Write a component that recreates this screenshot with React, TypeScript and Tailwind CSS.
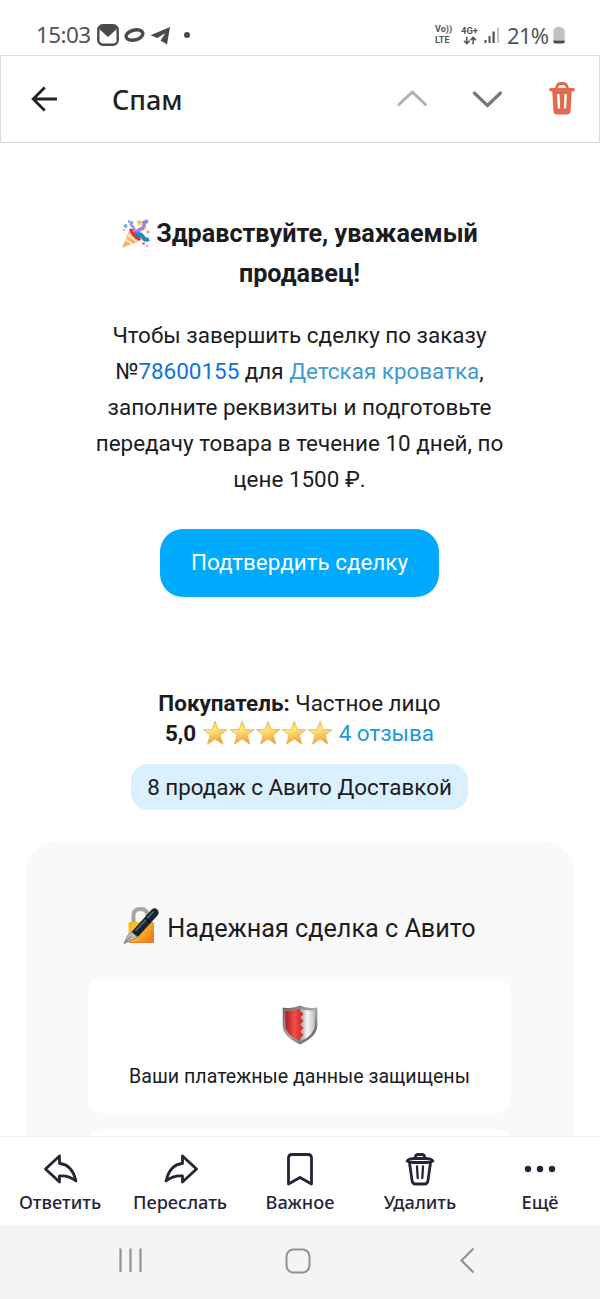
import type { ReactNode } from "react";

const ink = "#25243a";

function StatusBar() {
  return (
    <div className="flex h-[55px] items-end justify-between pr-[35px] pb-2 pl-[36px] font-['Noto_Sans',sans-serif] text-[#555]">
      <div className="flex h-6 items-center">
        <span className="w-[61px] text-[22.5px] leading-6 tracking-[-0.6px]">15:03</span>
        <svg width="22" height="22" viewBox="0 0 22 22" className="text-[#4a4a4a]">
          <rect x="1.3" y="1.3" width="19.4" height="19.4" rx="4.5" fill="none" stroke="currentColor" strokeWidth="2.4" />
          <path d="M2.5 1.5h17v3.8L11 13 2.5 5.3z" fill="currentColor" />
        </svg>
        <svg width="22" height="22" viewBox="0 0 22 22" className="ml-[5px]">
          <ellipse cx="10.5" cy="11" rx="8.5" ry="4.9" fill="none" stroke="#4a4a4a" strokeWidth="3.4" transform="rotate(-14 10.5 11)" />
        </svg>
        <svg width="21" height="20" viewBox="0 0 21 20" className="ml-1 mt-px">
          <path d="M20 1 17 18.500 10.500 14.500 15.500 7 7.500 12 0.500 9.200Z" fill="#4a4a4a" />
        </svg>
        <span className="ml-[13px] h-[6px] w-[6px] rounded-full bg-[#4a4a4a]" />
      </div>
      <div className="flex h-6 items-center">
        <div className="w-[25px] font-['Roboto',sans-serif] text-[9px] leading-[11px] font-bold">
          <div>Vo))</div>
          <div>LTE</div>
        </div>
        <div className="flex w-[19px] flex-col items-center font-['Roboto',sans-serif] text-[9.5px] leading-[11px] font-bold">
          <div>4G+</div>
          <svg width="14" height="9" viewBox="0 0 14 9" fill="none" stroke="currentColor" strokeWidth="1.6">
            <path d="M3.8.8v6.4M1 4.7l2.8 2.8 2.8-2.8M10.2 8.2V1.8M7.4 4.3l2.8-2.8L13 4.3" />
          </svg>
        </div>
        <svg width="17" height="18" viewBox="0 0 17 18" className="ml-[5px]">
          <rect x="0.5" y="14" width="2" height="3" fill="#555" />
          <rect x="4.5" y="10" width="2" height="7" fill="#555" />
          <rect x="8.5" y="5.5" width="2.2" height="11.5" fill="#555" />
          <rect x="13" y="1.5" width="2" height="15.5" fill="#c6c6c6" />
        </svg>
        <span className="ml-[6px] w-[43px] text-[22px] leading-6 tracking-[-0.7px]">21%</span>
        <svg width="12" height="18" viewBox="0 0 12 18" className="ml-[3px]">
          <path d="M3.5 1.8V.8h5v1q3.2.3 3.2 3.2v9.5H.3V5q0-2.9 3.2-3.2z" fill="#c2c2c2" />
          <path d="M.3 14.400h11.400v1.200q0 1.900-2 1.900H2.300q-2 0-2-1.900z" fill="#4a4a4a" />
        </svg>
      </div>
    </div>
  );
}

function Header() {
  return (
    <header className="flex h-[88px] items-center border border-[#dcdcdc] pr-[24px] pl-[29px]">
      <svg width="28" height="28" viewBox="0 0 28 28" fill="none" stroke="#222" strokeWidth="2.8">
        <path d="M27 14H3M14.700 2.500 3.200 14l11.500 11.500" />
      </svg>
      <h1 className="ml-[54px] font-['Noto_Sans',sans-serif] text-[27px] leading-none font-medium text-[#222]">Спам</h1>
      <div className="ml-auto flex items-center">
        <svg width="32" height="20" viewBox="0 0 32 20" fill="none" stroke="#b1b1b1" strokeWidth="3" strokeLinecap="round">
          <path d="M3 15.500 16.300 3 29.500 15.500" />
        </svg>
        <svg width="32" height="20" viewBox="0 0 32 20" fill="none" stroke="#777" strokeWidth="3.200" strokeLinecap="round" className="ml-[43px]">
          <path d="M3.300 4 16.500 16.500 29.500 4" />
        </svg>
        <svg width="26" height="34" viewBox="0 0 26 34" className="-mt-[2px] ml-[46px]">
          <path d="M7 8.500 8.200 5Q9.200 2.500 11.500 2.500H14.500Q16.800 2.500 17.800 5L19 8.500" fill="none" stroke="#e26a50" strokeWidth="2.800" />
          <path d="M1.800 8.700H24.200" stroke="#e26a50" strokeWidth="3.200" strokeLinecap="round" />
          <path d="M3.200 9H22.800L21.600 30Q21.400 33.500 18 33.500H8Q4.600 33.500 4.400 30Z" fill="#e26a50" />
          <path d="M9.300 13 10 27.500M16.700 13 16 27.500" stroke="#fff" strokeWidth="2.400" />
        </svg>
      </div>
    </header>
  );
}

function PartyPopper() {
  return (
    <svg width="29" height="30" viewBox="0 0 29 30" className="mr-[6px]">
      <defs>
        <linearGradient id="cone" x1="0" y1="0" x2="1" y2="1">
          <stop offset="0" stopColor="#fbdc9e" />
          <stop offset="1" stopColor="#e58f45" />
        </linearGradient>
      </defs>
      <path d="M1 29 8.500 10Q15 14 19.500 21.500Z" fill="url(#cone)" />
      <path d="M4.500 20.500 11.500 25M6.500 15.500 16 23" stroke="#fff0cf" strokeWidth="1.500" />
      <path d="M8.500 10Q13 9 17 14.500T19.500 21.500Q15 21 11.500 16.500T8.500 10Z" fill="#c33547" />
      <path d="M12 13Q15 10.500 11.500 7.500T12 3" stroke="#a68be0" strokeWidth="2.600" fill="none" />
      <path d="M16 15Q16 11 20 10T23 3.500L27 2" stroke="#9b80df" strokeWidth="3.600" fill="none" />
      <path d="M15 16Q20 14 22 18T28 20" stroke="#178cba" strokeWidth="4" fill="none" />
      <path d="m18.500 0 1 2.300 2.600.2-2 1.700.6 2.500-2.200-1.300-2.300 1.300.7-2.500-2-1.700 2.600-.2z" fill="#f3c43b" />
      <circle cx="4.500" cy="7" r="2" fill="#65b8e8" />
      <circle cx="8" cy="2.500" r="1.300" fill="#55aee2" />
      <circle cx="27" cy="13" r="1.600" fill="#ee85a3" />
      <circle cx="22.500" cy="24.500" r="1.600" fill="#ed75a1" />
      <circle cx="26" cy="27" r="1.200" fill="#f3a0b6" />
      <circle cx="24" cy="9" r="1.200" fill="#f5b660" />
      <circle cx="3" cy="11" r="1" fill="#ee7fa0" />
    </svg>
  );
}

function Star() {
  return (
    <svg width="26.300" height="26" viewBox="0 0 26 26">
      <defs>
        <linearGradient id="gold" x1="0" y1="0" x2="0.3" y2="1">
          <stop offset="0" stopColor="#f4c735" />
          <stop offset="0.450" stopColor="#ffe77a" />
          <stop offset="1" stopColor="#f2a33c" />
        </linearGradient>
      </defs>
      <path
        d="m13 1 3.100 8.600h8.900l-7 5.500 2.700 9.200-7.700-5.400-7.700 5.400 2.700-9.200-7-5.500h8.900z"
        fill="url(#gold)"
        stroke="#e3ad4b"
        strokeWidth="0.700"
      />
    </svg>
  );
}

function LockWithPen() {
  return (
    <svg width="36" height="38" viewBox="0 0 36 38" className="-mt-[5px]">
      <defs>
        <linearGradient id="lock" x1="0" y1="0" x2="1" y2="0.600">
          <stop offset="0" stopColor="#f4ad20" />
          <stop offset="0.400" stopColor="#ffc928" />
          <stop offset="1" stopColor="#ef7c22" />
        </linearGradient>
      </defs>
      <path d="M10.500 18V9.500Q10.500 3 17.500 3T24.500 9.500V18" fill="none" stroke="#a6a6a6" strokeWidth="4" />
      <rect x="5.500" y="16" width="25.500" height="21" rx="1.500" fill="url(#lock)" />
      <path d="M6 36.500H30.500" stroke="#e17c21" strokeWidth="1" />
      <path d="M8.500 26 28.500 3.800Q31.500 1 34.200 3.500T34.500 9.500L14.800 31Q11 30.500 8.500 26Z" fill="#17252f" />
      <path d="M12.500 25 30.500 5.500" stroke="#557386" strokeWidth="1.300" />
      <path d="M22.500 12 27.500 17" stroke="#080e14" strokeWidth="1.500" />
      <path d="M8.500 26 14.800 31 9 34 1 37.500 4.500 29.500Z" fill="#b9bdc0" stroke="#707578" strokeWidth="0.700" />
      <path d="M1.500 37 8 30.500" stroke="#555" strokeWidth="0.900" />
    </svg>
  );
}

function Shield() {
  return (
    <svg width="36" height="40" viewBox="0 0 36 40">
      <defs>
        <linearGradient id="rim" x1="0" y1="0" x2="1" y2="1">
          <stop offset="0" stopColor="#666" />
          <stop offset="0.500" stopColor="#aaa" />
          <stop offset="1" stopColor="#555" />
        </linearGradient>
        <linearGradient id="red">
          <stop offset="0" stopColor="#b51b20" />
          <stop offset="0.500" stopColor="#f05048" />
          <stop offset="1" stopColor="#d61d20" />
        </linearGradient>
        <linearGradient id="silver">
          <stop offset="0.500" stopColor="#929292" />
          <stop offset="0.720" stopColor="#f8f8f8" />
          <stop offset="1" stopColor="#b8b8b8" />
        </linearGradient>
      </defs>
      <path d="M18 2Q12 5 2 4V21Q2.500 31 18 38Q33.500 31 34 21V4Q24 5 18 2Z" fill="url(#silver)" stroke="url(#rim)" strokeWidth="2.600" />
      <path d="M3.500 6Q12 6 18 3.500V6L21.500 9 18 12.500 21.500 16 18 19.500 21.500 23 18 26.500 21.500 30 18 33V36Q4 30 3.500 21Z" fill="url(#red)" />
    </svg>
  );
}

function Message() {
  return (
    <main className="flex h-[993px] flex-col items-center overflow-hidden pt-[71px] pr-px text-center font-['Roboto',sans-serif] text-[#1c1c1e]">
      <h2 className="text-[25.2px] leading-10 font-bold">
        <span className="flex items-center justify-center">
          <PartyPopper />
          <span className="whitespace-nowrap">Здравствуйте, уважаемый</span>
        </span>
        продавец!
      </h2>
      <p className="mt-[24px] text-[22.45px] leading-[35.9px] whitespace-nowrap">
        Чтобы завершить сделку по заказу
        <br />№<span className="text-[#0b74dc]">78600155</span> для <span className="text-[#3d9bd3]">Детская кроватка</span>,
        <br />
        заполните реквизиты и подготовьте
        <br />
        передачу товара в течение 10 дней, по
        <br />
        цене 1500 ₽.
      </p>
      <button className="mt-[31.5px] h-[68px] w-[279px] shrink-0 rounded-[23px] bg-[#00aaff] text-[22.45px] text-white">
        Подтвердить сделку
      </button>
      <div className="mt-[91px] text-[22.45px] leading-[30px] whitespace-nowrap">
        <div>
          <b>Покупатель:</b> Частное лицо
        </div>
        <div className="flex items-center justify-center">
          <b className="mr-[6px]">5,0</b>
          {[1, 2, 3, 4, 5].map((n) => (
            <Star key={n} />
          ))}
          <span className="ml-[5px] text-[#1a9ae0]">4 отзыва</span>
        </div>
      </div>
      <div className="mt-[16px] h-[46px] w-[337px] shrink-0 rounded-[17px] bg-[#daf0ff] text-[22.4px] leading-[46px] whitespace-nowrap">
        8 продаж с Авито Доставкой
      </div>
      <section className="mt-[31px] flex h-[320px] w-[548px] shrink-0 flex-col items-center rounded-t-[30px] bg-[#f9f9f9] pt-[67px]">
        <h3 className="flex h-10 items-center text-[25.2px] whitespace-nowrap">
          <LockWithPen />
          <span className="mt-0.5 ml-2">Надежная сделка с Авито</span>
        </h3>
        <div className="mt-[31px] flex h-[134px] w-[423px] shrink-0 flex-col items-center rounded-[14px] bg-white pt-[26px]">
          <Shield />
          <p className="mt-[17px] text-[19.6px] leading-[30px] whitespace-nowrap">Ваши платежные данные защищены</p>
        </div>
        <div className="mt-4 h-16 w-[423px] shrink-0 rounded-[14px] bg-white" />
      </section>
    </main>
  );
}

function Action({ label, children }: { label: string; children: ReactNode }) {
  return (
    <button className="flex w-[120px] flex-col items-center">
      <svg width="36" height="36" viewBox="0 0 36 36" fill="none" stroke={ink} strokeWidth="2.800" strokeLinejoin="round" strokeLinecap="round">
        {children}
      </svg>
      <span className="mt-[3px] leading-6">{label}</span>
    </button>
  );
}

function ActionBar() {
  return (
    <footer className="flex h-[89px] border-t border-[#f1f1f1] bg-white pt-[14px] font-['Noto_Sans',sans-serif] text-[18.2px] font-medium text-[#25243a]">
      <Action label="Ответить">
        <path d="M17.500 5 3.500 18 17.500 31V25Q26 24 34 30Q30 13.500 17.500 12.500Z" />
      </Action>
      <Action label="Переслать">
        <path d="M20.500 5 34.500 18 20.500 31V25Q12 24 4 30Q8 13.500 20.500 12.500Z" />
      </Action>
      <Action label="Важное">
        <path d="M6.500 33V7Q6.500 3.500 10 3.500H26Q29.500 3.500 29.500 7V33L18 26.500Z" />
      </Action>
      <Action label="Удалить">
        <path d="M5 10Q7 7.500 12.500 7.500H23.500Q29 7.500 31 10Q29 11.500 23.500 11.500H12.500Q7 11.500 5 10ZM7.500 11.500 10 29.500Q10.500 33 13.500 33H22.500Q25.500 33 26 29.500L28.500 11.500M13 7Q13.500 3.500 16 3.500H20Q22.500 3.500 23 7" />
        <path d="M15 15.500 15.700 27M21 15.500 20.300 27" strokeWidth="2.300" />
      </Action>
      <Action label="Ещё">
        <g fill={ink} stroke="none">
          <circle cx="6" cy="18" r="3.200" />
          <circle cx="18" cy="18" r="3.200" />
          <circle cx="30" cy="18" r="3.200" />
        </g>
      </Action>
    </footer>
  );
}

function SystemNav() {
  return (
    <nav className="flex h-[74px] items-start bg-[#f4f4f6] pt-[22px] pl-[118px]">
      <svg width="25" height="26" viewBox="0 0 25 26" stroke="#929292" strokeWidth="2.200">
        <path d="M2.500 1.500V25M12.500 1.500V25M22.500 1.500V25" />
      </svg>
      <svg width="26" height="26" viewBox="0 0 26 26" fill="none" stroke="#929292" strokeWidth="2" className="mt-px ml-[142px]">
        <rect x="1.500" y="1.500" width="23" height="23" rx="7" />
      </svg>
      <svg width="16" height="27" viewBox="0 0 16 27" fill="none" stroke="#929292" strokeWidth="2.200" className="ml-[148px]">
        <path d="M14.500 1.500 2.500 13.500 14.500 25.500" />
      </svg>
    </nav>
  );
}

export default function App() {
  return (
    <div className="h-[1299px] w-[600px] overflow-hidden bg-white">
      <StatusBar />
      <Header />
      <Message />
      <ActionBar />
      <SystemNav />
    </div>
  );
}
